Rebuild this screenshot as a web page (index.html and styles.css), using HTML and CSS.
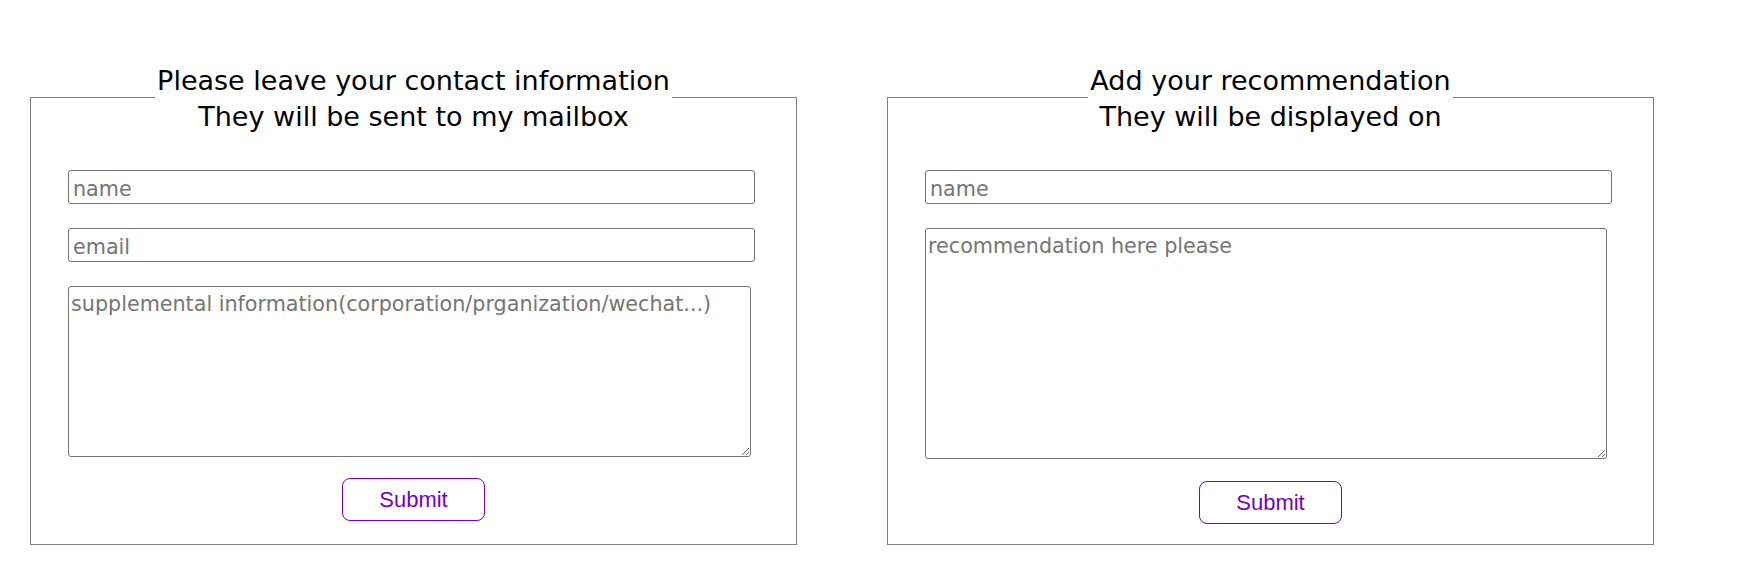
FILE: index.html
```html
<!DOCTYPE html>
<html>
<head>
<meta charset="utf-8">
<title>Contact</title>
<link rel="stylesheet" href="styles.css">
</head>
<body>
<main class="page">
  <form class="card">
    <fieldset class="box box-contact">
      <legend class="title">Please leave your contact information<br>They will be sent to my mailbox</legend>
      <input class="field first" type="text" placeholder="name">
      <input class="field" type="text" placeholder="email">
      <textarea class="area area-contact" placeholder="supplemental information(corporation/prganization/wechat...)"></textarea>
      <button class="submit" type="button">Submit</button>
    </fieldset>
  </form>
  <form class="card">
    <fieldset class="box box-recommend">
      <legend class="title">Add your recommendation<br>They will be displayed on</legend>
      <input class="field first" type="text" placeholder="name">
      <textarea class="area area-recommend" placeholder="recommendation here please"></textarea>
      <button class="submit submit-low" type="button">Submit</button>
    </fieldset>
  </form>
</main>
</body>
</html>
```
FILE: styles.css
```css
html, body {
  margin: 0;
  padding: 0;
  background: #ffffff;
}

body {
  font-family: "DejaVu Sans", sans-serif;
  color: #000000;
}

.page {
  display: flex;
  align-items: flex-start;
  gap: 90px;
  padding: 59px 0 0 30px;
}

.card {
  margin: 0;
}

.box {
  box-sizing: border-box;
  width: 767px;
  height: 486px;
  margin: 0;
  padding: 0 37px;
  border: 1px solid #808080;
}

.title {
  margin: 0 auto;
  padding: 4px 2px 0;
  font-size: 27px;
  line-height: 36px;
  text-align: center;
  color: #000000;
}

.field {
  display: block;
  box-sizing: border-box;
  width: 687px;
  height: 34px;
  margin: 24px 0 0;
  padding: 4px 4px 0;
  border: 1px solid #767676;
  border-radius: 3px;
  font-family: "DejaVu Sans", sans-serif;
  font-size: 20.7px;
  color: #000000;
  background: #ffffff;
}

.field.first {
  margin-top: 35px;
}

.area {
  display: block;
  box-sizing: border-box;
  margin: 24px 0 0;
  padding: 5px 2px 2px;
  border: 1px solid #767676;
  border-radius: 3px;
  font-family: "DejaVu Sans", sans-serif;
  font-size: 20.7px;
  line-height: 24px;
  color: #000000;
  background: #ffffff;
}

.area-contact {
  width: 683px;
  height: 171px;
}

.area-recommend {
  width: 682px;
  height: 231px;
}

.field::placeholder,
.area::placeholder {
  color: #757575;
}

.submit {
  display: block;
  box-sizing: border-box;
  width: 143px;
  height: 43px;
  margin: 21px auto 0;
  padding: 0;
  border: 1px solid #7a00c8;
  border-radius: 8px;
  background: #ffffff;
  font-family: "Liberation Sans", Arial, sans-serif;
  font-size: 22px;
  color: #7300c4;
}

.submit-low {
  margin-top: 22px;
}
```
